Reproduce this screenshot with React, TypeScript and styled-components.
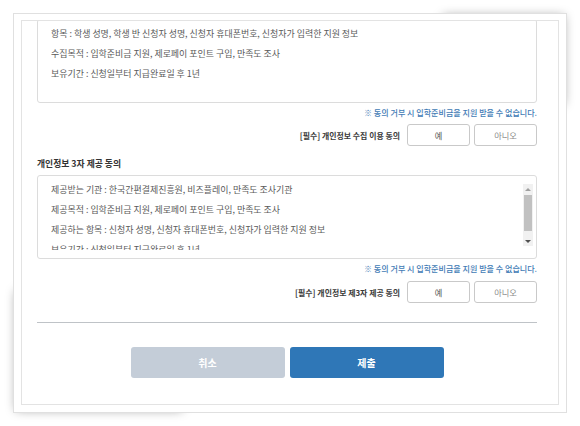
import React from 'react';
import styled, { createGlobalStyle } from 'styled-components';

const GlobalStyle = createGlobalStyle`
  html {
    background: #fff;
  }
  body {
    margin: 0;
    padding: 13px;
    font-family: "Noto Sans CJK KR", "Noto Sans", sans-serif;
    color: #555;
  }
  * {
    box-sizing: border-box;
  }
`;

const Frame = styled.div`
  position: relative;
  width: 554px;
  height: 400px;
  background: #fff;
  border: 1px solid #e0e0e0;
  padding: 6px 7px 7px 7px;
  display: flex;

  &::before,
  &::after {
    content: '';
    position: absolute;
    z-index: -1;
  }

  /* lifted corner, bottom left */
  &::before {
    left: 8px;
    bottom: 8px;
    width: 30%;
    height: 30%;
    box-shadow: -6px 6px 10px rgba(0, 0, 0, 0.4);
  }

  /* lifted corner, top right */
  &::after {
    right: 8px;
    top: 8px;
    width: 22%;
    height: 22%;
    box-shadow: 6px -6px 10px rgba(0, 0, 0, 0.4);
  }
`;

const Viewport = styled.div`
  flex: 1;
  border: 1px solid #e3e3e3;
  overflow: hidden;
  padding: 0 21px 0 15px;
`;

const Content = styled.div`
  margin-top: -2px;
  display: flex;
  flex-direction: column;
`;

const TermsBox = styled.div`
  height: 84px;
  border: 1px solid #dcdcdc;
  border-radius: 3px;
  padding: 8px 3px 8px 13px;
  display: flex;
  gap: 6px;
`;

const TermsText = styled.div`
  flex: 1;
  height: 66px;
  overflow: hidden;
`;

const TermsLine = styled.p`
  margin: 0 0 8px;
  font-size: 8.95px;
  line-height: 12px;
  color: #5a5a5a;
  white-space: nowrap;
`;

const ScrollTrack = styled.div`
  width: 10px;
  height: 62px;
  background: #f1f1f1;
  display: flex;
  flex-direction: column;
  align-items: center;
`;

const ScrollArrow = styled.div<{ $down?: boolean }>`
  height: 10px;
  display: flex;
  align-items: center;
  justify-content: center;

  &::after {
    content: '';
    border-left: 3px solid transparent;
    border-right: 3px solid transparent;
    ${(p) => (p.$down ? 'border-top: 3px solid #505050;' : 'border-bottom: 3px solid #a0a0a0;')}
  }
`;

const ScrollThumb = styled.div`
  width: 8px;
  height: 36px;
  margin-top: 1px;
  background: #c1c1c1;
`;

const Spacer = styled.div`
  flex: 1;
`;

const Notice = styled.p`
  margin: 4px 0 0;
  text-align: right;
  font-size: 8.05px;
  line-height: 12px;
  font-weight: 500;
  color: #3f7bb5;
`;

const ConsentRow = styled.div<{ $gapTop: number }>`
  margin-top: ${(p) => p.$gapTop}px;
  display: flex;
  justify-content: flex-end;
  align-items: center;
  gap: 4px;
`;

const ConsentLabel = styled.span`
  font-size: 7.9px;
  font-weight: 700;
  color: #3a3a3a;
  margin-right: 3px;
`;

const ChoiceButton = styled.button<{ $muted?: boolean }>`
  width: 63px;
  height: 22px;
  padding: 0;
  background: #fff;
  border: 1px solid #c9c9c9;
  border-radius: 3px;
  font-family: inherit;
  font-size: 8.2px;
  color: ${(p) => (p.$muted ? '#8a8a8a' : '#555')};
`;

const SectionTitle = styled.h3`
  margin: 11px 0 4px;
  font-size: 8.8px;
  line-height: 14px;
  font-weight: 700;
  color: #333;
`;

const Divider = styled.hr`
  margin: 19px 0 0;
  border: none;
  border-top: 1px solid #bfc3c7;
`;

const ActionRow = styled.div`
  margin-top: 24px;
  display: flex;
  justify-content: center;
  gap: 5px;
`;

const ActionButton = styled.button<{ $primary?: boolean }>`
  width: 154px;
  height: 31px;
  border: none;
  border-radius: 3px;
  font-family: inherit;
  font-size: 10px;
  font-weight: 700;
  color: #fff;
  background: ${(p) => (p.$primary ? '#2f77b7' : '#c4cdd8')};
`;

const collectTerms = [
  '항목 : 학생 성명, 학생 반 신청자 성명, 신청자 휴대폰번호, 신청자가 입력한 지원 정보',
  '수집목적 : 입학준비금 지원, 제로페이 포인트 구입, 만족도 조사',
  '보유기간 : 신청일부터 지급완료일 후 1년',
];

const provideTerms = [
  '제공받는 기관 : 한국간편결제진흥원, 비즈플레이, 만족도 조사기관',
  '제공목적 : 입학준비금 지원, 제로페이 포인트 구입, 만족도 조사',
  '제공하는 항목 : 신청자 성명, 신청자 휴대폰번호, 신청자가 입력한 지원 정보',
  '보유기간 : 신청일부터 지급완료일 후 1년',
];

const NOTICE = '※ 동의 거부 시 입학준비금을 지원 받을 수 없습니다.';

const App: React.FC = () => {
  return (
    <>
      <GlobalStyle />
      <Frame>
        <Viewport>
          <Content>
            <TermsBox>
              <TermsText>
                {collectTerms.map((t) => (
                  <TermsLine key={t}>{t}</TermsLine>
                ))}
              </TermsText>
            </TermsBox>
            <Notice>{NOTICE}</Notice>
            <ConsentRow $gapTop={5}>
              <ConsentLabel>[필수] 개인정보 수집 이용 동의</ConsentLabel>
              <ChoiceButton>예</ChoiceButton>
              <ChoiceButton $muted>아니오</ChoiceButton>
            </ConsentRow>

            <SectionTitle>개인정보 3자 제공 동의</SectionTitle>
            <TermsBox>
              <TermsText>
                {provideTerms.map((t) => (
                  <TermsLine key={t}>{t}</TermsLine>
                ))}
              </TermsText>
              <ScrollTrack>
                <ScrollArrow />
                <ScrollThumb />
                <Spacer />
                <ScrollArrow $down />
              </ScrollTrack>
            </TermsBox>
            <Notice>{NOTICE}</Notice>
            <ConsentRow $gapTop={6}>
              <ConsentLabel>[필수] 개인정보 제3자 제공 동의</ConsentLabel>
              <ChoiceButton>예</ChoiceButton>
              <ChoiceButton $muted>아니오</ChoiceButton>
            </ConsentRow>

            <Divider />
            <ActionRow>
              <ActionButton>취소</ActionButton>
              <ActionButton $primary>제출</ActionButton>
            </ActionRow>
          </Content>
        </Viewport>
      </Frame>
    </>
  );
};

export default App;
